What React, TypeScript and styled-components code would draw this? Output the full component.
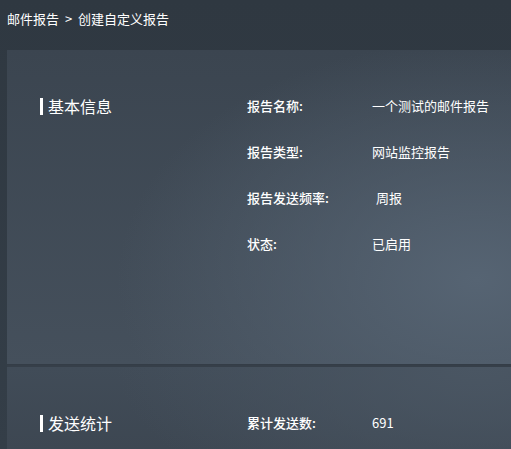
import styled, { createGlobalStyle } from "styled-components"

const GlobalStyle = createGlobalStyle`
    html, body {
        margin: 0;
        padding: 0;
        background-color: #303a44;
    }
    body {
        font-family: "Noto Sans CJK SC", "Noto Sans", sans-serif;
        color: #ffffff;
    }
`

const Page = styled.div`
    width: 511px;
    height: 449px;
    overflow: hidden;
    background: linear-gradient(180deg, #2f3841 0%, #343e48 100%);
    display: flex;
    flex-direction: column;
`

const Breadcrumb = styled.div`
    height: 50px;
    padding: 9px 0 0 7px;
    box-sizing: border-box;
    font-size: 13px;
    line-height: 20px;
    color: #ffffff;
    word-spacing: 3px;
`

const Panel = styled.div`
    margin-left: 7px;
    flex: 1;
    display: flex;
    flex-direction: column;
    background-color: #363f49;
`

const Card = styled.section<{ $height?: number }>`
    height: ${p => (p.$height ? `${p.$height}px` : "auto")};
    flex: ${p => (p.$height ? "none" : 1)};
    box-sizing: border-box;
    padding: 46px 0 0 33px;
    display: flex;
    align-items: flex-start;
    background:
        radial-gradient(ellipse 360px 240px at 470px 230px, #566473 0%, rgba(86, 100, 115, 0) 100%),
        linear-gradient(180deg, #3b4550 0%, #45505c 100%);
    border-bottom: ${p => (p.$height ? "1px solid #343d47" : "none")};
    margin-bottom: ${p => (p.$height ? "2px" : "0")};
`

const SecondCard = styled(Card)`
    background:
        radial-gradient(ellipse 360px 160px at 470px 0px, #4a5663 0%, rgba(74, 86, 99, 0) 100%),
        linear-gradient(180deg, #414c58 0%, #3d4752 100%);
`

const Heading = styled.h2`
    width: 207px;
    margin: 0;
    flex: none;
    display: flex;
    align-items: center;
    gap: 5px;
    font-size: 16px;
    font-weight: 400;
    line-height: 20px;
    height: 20px;
    &::before {
        content: "";
        display: block;
        width: 3px;
        height: 17px;
        background-color: #ffffff;
    }
`

const Fields = styled.dl`
    margin: 0;
    display: grid;
    grid-template-columns: 125px 1fr;
    align-content: start;
    row-gap: 26px;
    font-size: 13px;
    line-height: 20px;
`

const Label = styled.dt`
    margin: 0;
    font-weight: 500;
`

const Value = styled.dd<{ $indent?: boolean }>`
    margin: 0;
    padding-left: ${p => (p.$indent ? "4px" : "0")};
`

export default function App() {
    return (
        <>
            <GlobalStyle />
            <Page>
                {/* 面包屑 */}
                <Breadcrumb>邮件报告 &gt; 创建自定义报告</Breadcrumb>

                <Panel>
                    {/* 基本信息 */}
                    <Card $height={315}>
                        <Heading>基本信息</Heading>
                        <Fields>
                            <Label>报告名称:</Label>
                            <Value>一个测试的邮件报告</Value>
                            <Label>报告类型:</Label>
                            <Value>网站监控报告</Value>
                            <Label>报告发送频率:</Label>
                            <Value $indent>周报</Value>
                            <Label>状态:</Label>
                            <Value>已启用</Value>
                        </Fields>
                    </Card>

                    {/* 发送统计 */}
                    <SecondCard>
                        <Heading>发送统计</Heading>
                        <Fields>
                            <Label>累计发送数:</Label>
                            <Value>691</Value>
                        </Fields>
                    </SecondCard>
                </Panel>
            </Page>
        </>
    )
}
